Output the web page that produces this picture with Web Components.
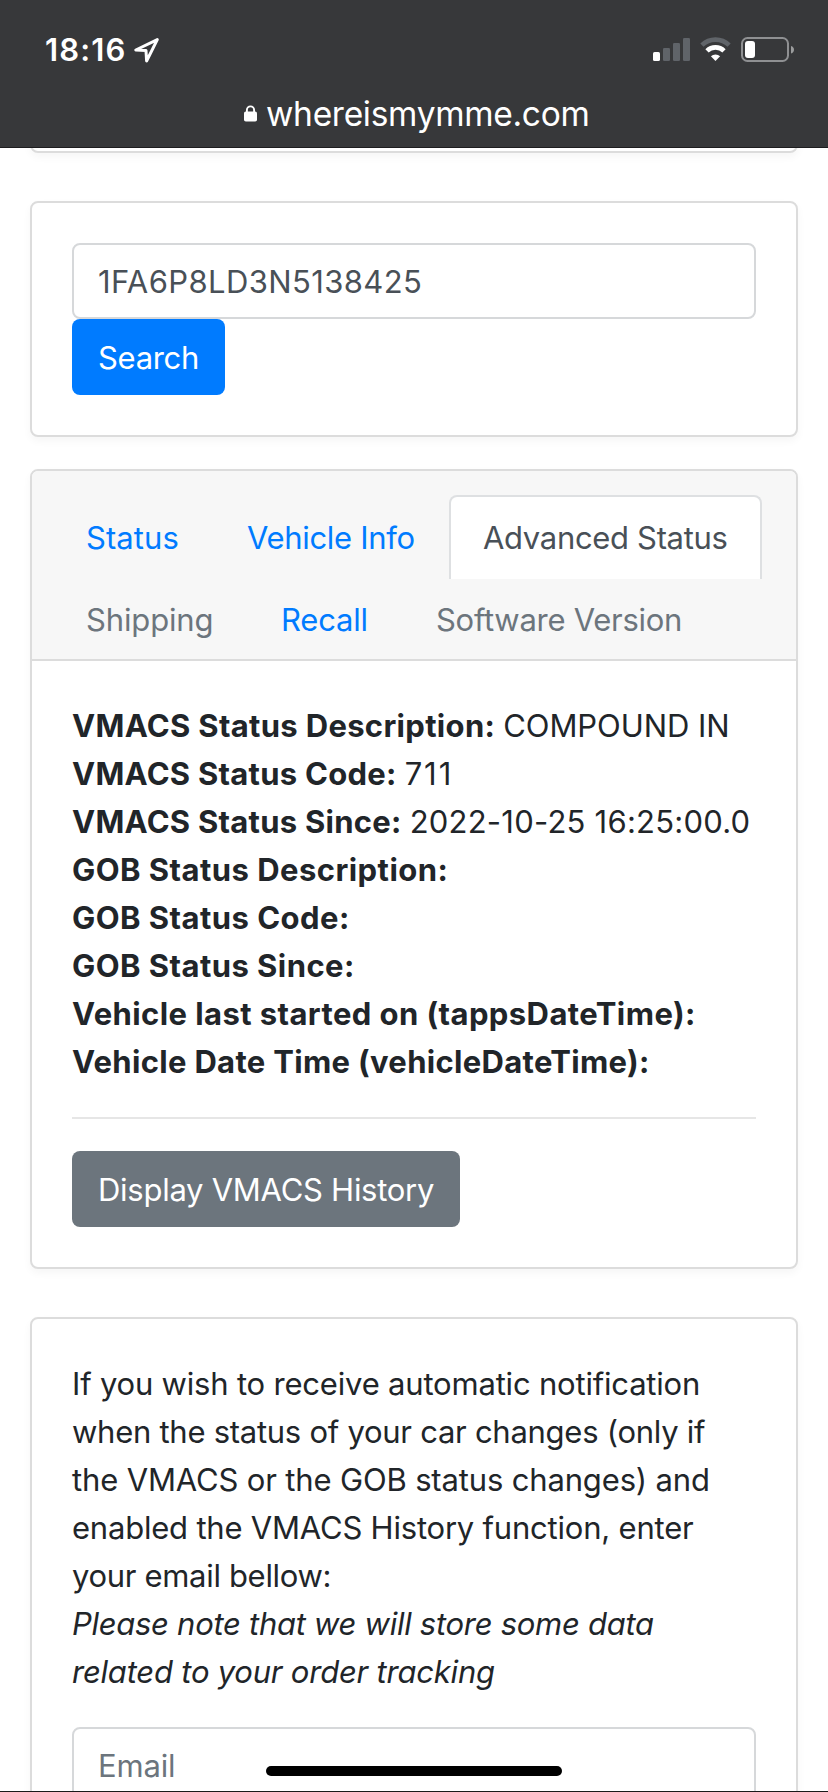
<!DOCTYPE html>
<html lang="en">
<head>
<meta charset="utf-8">
<title>whereismymme.com</title>
<style>
html,body{margin:0;height:1792px;overflow:hidden;background:#fff}
body{font:31px/48px Inter,"Liberation Sans",sans-serif;color:#212529}
</style>
</head>
<body>
<phone-screen></phone-screen>
<script>
const define=(name,html,init)=>customElements.define(name,class extends HTMLElement{
  constructor(){super();this.attachShadow({mode:'open'}).innerHTML=html;}
  connectedCallback(){if(init)init.call(this);}
});

/* A single line of text tracked so that its drawn width equals the "w" attribute. */
const ctx=document.createElement('canvas').getContext('2d');
define('fit-text','<style>:host{display:inline-block;vertical-align:top;white-space:nowrap;padding-top:1px;margin-bottom:-1px}</style><slot></slot>',function(){
  const s=getComputedStyle(this),t=this.textContent;
  ctx.font=`${s.fontStyle} ${s.fontWeight} ${s.fontSize} ${s.fontFamily}`;
  const m=ctx.measureText(t),ink=m.actualBoundingBoxLeft+m.actualBoundingBoxRight;
  this.style.letterSpacing=((+this.getAttribute('w')-ink)/(t.length-1)).toFixed(3)+'px';
});

define('status-bar',`<style>
:host{display:block;height:148px;background:#37383a;border-bottom:1px solid #1d1d1f;color:#fff;box-sizing:border-box}
.top{display:flex;height:76px;padding:25px 33px 0 45px;box-sizing:border-box;justify-content:space-between}
.time{display:flex;font-weight:600}
.url{display:flex;padding-left:244px;font-size:33.5px;height:60px;margin-top:13px}
svg{display:block;flex:none}
.url fit-text{margin-left:9px}
</style>
<div class="top"><div class="time"><fit-text w="78.5">18:16</fit-text>
<svg style="margin:11px 0 0 6px" width="28" height="28" viewBox="0 0 28 28" fill="none" stroke="#fff" stroke-width="3" stroke-linejoin="round"><path d="M25.3 3.6 3.8 14l10.2.6.6 10.4z"/></svg></div>
<svg width="142" height="26" viewBox="653 37 142 26" style="margin-top:12px">
<rect x="653" y="52" width="7" height="9" rx="1.6" fill="#fff"/>
<g fill="#606469"><rect x="663" y="48" width="7" height="13" rx="1.2"/><rect x="673" y="43" width="7" height="18" rx="1.2"/><rect x="683" y="38" width="7" height="23" rx="1.2"/></g>
<path d="M701.9 45.2a19.5 19.5 0 0 1 27.2 0" fill="none" stroke="#606469" stroke-width="4.6"/>
<path d="M707 50.9a12 12 0 0 1 17 0" fill="none" stroke="#fff" stroke-width="4.6"/>
<path d="M715.5 61l-4.6-4.7a6.5 6.5 0 0 1 9.2 0z" fill="#fff"/>
<rect x="742" y="38" width="46" height="23" rx="5.5" fill="none" stroke="#8f9092" stroke-width="2"/>
<rect x="745" y="41" width="10" height="17" rx="3" fill="#fff"/><path d="M791 46q3 1 3 3.8t-3 3.8z" fill="#9b9c9d"/>
</svg></div>
<div class="url"><svg width="13" height="17" viewBox="0 0 13 17" style="margin-top:16px"><rect y="6.5" width="13" height="10" rx="1.8" fill="#fff"/><path d="M2.9 8V5a3.6 3.6 0 0 1 7.2 0v3" fill="none" stroke="#fff" stroke-width="1.9"/></svg><fit-text w="320.5">whereismymme.com</fit-text></div>`);

define('ui-card',`<style>
:host{display:block;box-sizing:border-box;margin:0 30px;border:2px solid #dcdcdc;border-radius:8px;background:#fff;box-shadow:0 4px 8px rgba(0,0,0,.04)}
.body{padding:40px}
</style><slot name="header"></slot><div class="body"><slot></slot></div>`);

define('ui-field',`<style>
:host{display:block;box-sizing:border-box;height:76px;border:2px solid #d6d8da;border-radius:8px;padding:12px 24px;color:#495057;background:#fff}
:host([placeholder]){color:#6c757d}
</style><slot></slot>`);

define('ui-button',`<style>
:host{display:block;box-sizing:border-box;height:76px;border-radius:8px;padding:14px 26px;color:#fff;background:#007bff}
:host([secondary]){background:#6c757d}
</style><slot></slot>`);

define('tab-list',`<style>
:host{display:flex;flex-wrap:wrap;padding:24px 20px 0;background:#f7f7f7;border-bottom:2px solid #dcdcdc;border-radius:6px 6px 0 0}
</style><slot></slot>`);

define('tab-item',`<style>
:host{display:block;box-sizing:border-box;height:84px;padding:16px 32px;margin-bottom:-2px;border:2px solid transparent;border-bottom:0;border-radius:8px 8px 0 0;color:#007bff}
:host([active]){color:#495057;background:#fff;border-color:#dee0e2}
:host([disabled]){color:#6c757d}
</style><slot></slot>`);

define('status-row',`<style>
:host{display:flex;height:48px;gap:8px}
::slotted([slot=label]){font-weight:650}
</style><slot name="label"></slot><slot></slot>`);

define('phone-screen',`<style>
:host{display:block;position:relative;height:1792px;overflow:hidden}
.prev{height:30px;margin-top:-25px}
.search{margin-top:48px}
.tabs{margin-top:32px}
.mail{margin-top:48px}
status-bar{position:relative;z-index:1}
p{margin:0 0 32px}p fit-text{display:block}
em{display:block}
hr{border:0;border-top:2px solid #e6e6e6;margin:32px 0}
.home{position:absolute;left:266px;top:1766px;width:296px;height:10px;border-radius:5px;background:#000}
.edge{position:absolute;left:0;right:0;bottom:0;height:1px;background:#1a1a1a}
</style>
<status-bar></status-bar>
<ui-card class="prev" style="overflow:hidden"></ui-card>
<ui-card class="search">
<ui-field><fit-text w="321">1FA6P8LD3N5138425</fit-text></ui-field>
<ui-button style="width:153px"><fit-text w="98">Search</fit-text></ui-button>
</ui-card>
<ui-card class="tabs">
<tab-list slot="header">
<tab-item style="width:161px"><fit-text w="90.5">Status</fit-text></tab-item><tab-item style="width:236px"><fit-text w="166.5">Vehicle Info</fit-text></tab-item><tab-item active style="width:313px"><fit-text w="243.5">Advanced Status</fit-text></tab-item>
<tab-item disabled style="width:195px"><fit-text w="124.5">Shipping</fit-text></tab-item><tab-item style="width:155px"><fit-text w="83.5">Recall</fit-text></tab-item><tab-item disabled style="width:314px"><fit-text w="243">Software Version</fit-text></tab-item>
</tab-list>
<status-row><fit-text slot="label" w="420.5">VMACS Status Description:</fit-text><fit-text w="223">COMPOUND IN</fit-text></status-row>
<status-row><fit-text slot="label" w="322">VMACS Status Code:</fit-text><fit-text w="43">711</fit-text></status-row>
<status-row><fit-text slot="label" w="327">VMACS Status Since:</fit-text><fit-text w="337">2022-10-25 16:25:00.0</fit-text></status-row>
<status-row><fit-text slot="label" w="372.5">GOB Status Description:</fit-text></status-row>
<status-row><fit-text slot="label" w="274">GOB Status Code:</fit-text></status-row>
<status-row><fit-text slot="label" w="279">GOB Status Since:</fit-text></status-row>
<status-row><fit-text slot="label" w="621">Vehicle last started on (tappsDateTime):</fit-text></status-row>
<status-row><fit-text slot="label" w="575">Vehicle Date Time (vehicleDateTime):</fit-text></status-row>
<hr>
<ui-button secondary style="width:388px"><fit-text w="334">Display VMACS History</fit-text></ui-button>
</ui-card>
<ui-card class="mail">
<p><fit-text w="624">If you wish to receive automatic notification</fit-text>
<fit-text w="632">when the status of your car changes (only if</fit-text>
<fit-text w="636">the VMACS or the GOB status changes) and</fit-text>
<fit-text w="620">enabled the VMACS History function, enter</fit-text>
<fit-text w="257.5">your email bellow:</fit-text>
<em><fit-text w="581">Please note that we will store some data</fit-text>
<fit-text w="423">related to your order tracking</fit-text></em></p>
<ui-field placeholder><fit-text w="74">Email</fit-text></ui-field>
</ui-card>
<div class="home"></div><div class="edge"></div>
`);
</script>
</body>
</html>
